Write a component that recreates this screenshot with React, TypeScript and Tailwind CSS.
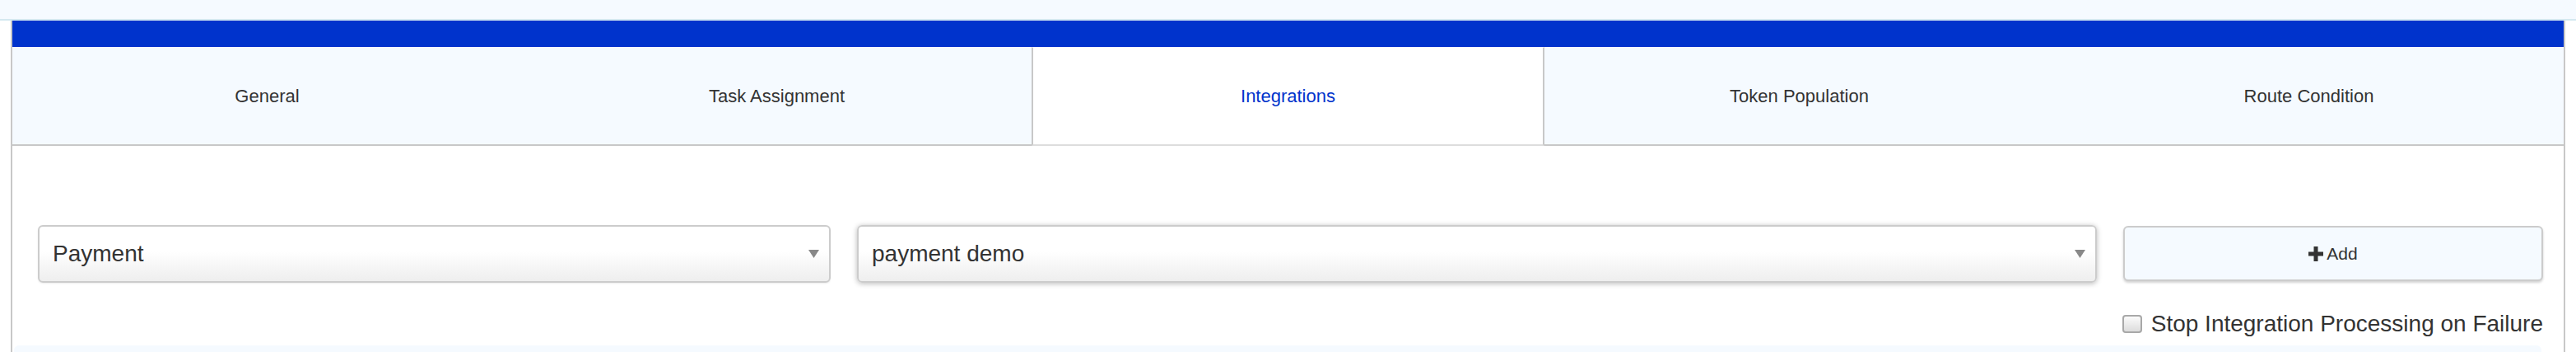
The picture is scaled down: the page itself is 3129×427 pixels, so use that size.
import React from "react";

const tabs = ["General", "Task Assignment", "Integrations", "Token Population", "Route Condition"];

function Arrow() {
  return (
    <svg width="13" height="10" viewBox="0 0 13 10" className="shrink-0">
      <polygon points="0,0 13,0 6.5,10" fill="#888888" />
    </svg>
  );
}

function SelectBox({ value, className }: { value: string; className: string }) {
  return (
    <div
      className={`h-[70px] rounded-[6px] border-2 border-[#cccccc] bg-[linear-gradient(to_bottom,#ffffff_45%,#eeeeee_100%)] flex items-center justify-between pl-[16px] pr-[12px] ${className}`}
    >
      <span className="text-[28px] leading-[28px] text-[#333333]">{value}</span>
      <Arrow />
    </div>
  );
}

export default function App() {
  return (
    <div className="w-[3129px] h-[427px] bg-white overflow-hidden font-['Liberation_Sans',Arial,sans-serif]">
      <div className="h-[25px] bg-[#f5faff] border-b-2 border-[#d4e8f0]" />
      <div className="mx-[13px] border-x-2 border-[#c8c8c8]">
        <div className="h-[32px] bg-[#0033cc]" />
        <div className="flex h-[120px]">
          {tabs.map((t, i) =>
            i === 2 ? (
              <div
                key={t}
                className="flex-1 flex items-center justify-center bg-white border-x-2 border-[#c8c8c8] border-b-2 border-b-[#dddddd] border-t border-t-[#f5faff] text-[22px] text-[#0033cc]"
              >
                {t}
              </div>
            ) : (
              <div
                key={t}
                className="flex-1 flex items-center justify-center bg-[#f5faff] border-b-2 border-[#c8c8c8] text-[22px] text-[#333333]"
              >
                {t}
              </div>
            )
          )}
        </div>
        <div className="pt-[96px] pl-[31px] pr-[25px]">
          <div className="flex items-start gap-[32px]">
            <SelectBox value="Payment" className="w-[963px] shadow-[0_1px_2px_rgba(0,0,0,0.08)]" />
            <SelectBox value="payment demo" className="flex-1 shadow-[0_1px_6px_rgba(0,0,0,0.28)]" />
            <button className="w-[510px] h-[67px] mt-[1px] rounded-[6px] border-2 border-[#cccccc] bg-[#f5faff] shadow-[0_2px_3px_rgba(0,0,0,0.18)] flex items-center justify-center gap-[4px] text-[21px] text-[#333333]">
              <svg width="18" height="18" viewBox="0 0 18 18">
                <rect x="6.5" y="0" width="5" height="18" fill="#333333" />
                <rect x="0" y="6.5" width="18" height="5" fill="#333333" />
              </svg>
              <span>Add</span>
            </button>
          </div>
          <div className="flex justify-end items-center gap-[11px] mt-[36px] h-[28px]">
            <div className="w-[24px] h-[22px] rounded-[4px] border-2 border-[#a8a8a8] bg-[linear-gradient(to_bottom,#fbfbfb,#dcdcdc)]" />
            <span className="text-[28px] leading-[28px] text-[#333333]">Stop Integration Processing on Failure</span>
          </div>
        </div>
        <div className="mt-[12px] ml-[2px] mr-[27px] h-[20px] rounded-t-[6px] bg-[#f5faff]" />
      </div>
    </div>
  );
}
